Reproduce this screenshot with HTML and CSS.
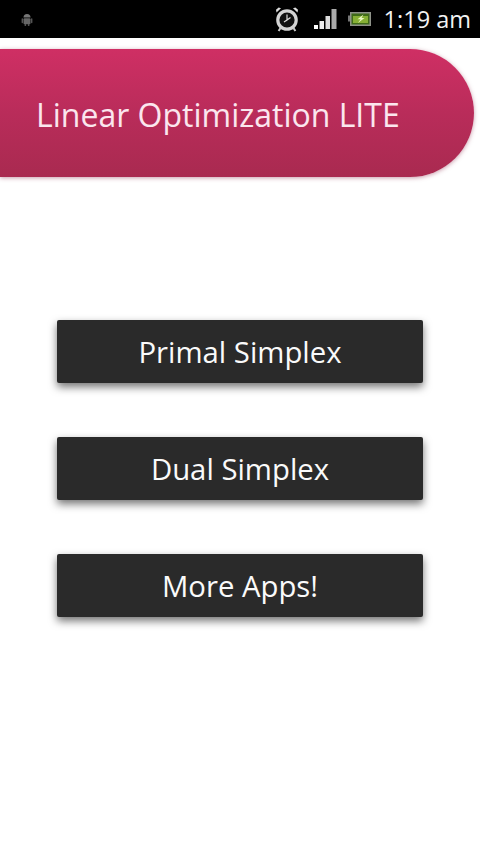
FILE: index.html
```html
<!DOCTYPE html>
<html lang="en">
<head>
<meta charset="utf-8">
<title>Linear Optimization LITE</title>
<link rel="stylesheet" href="styles.css">
</head>
<body>
<div class="status">
  <svg class="ic-android" width="16" height="16" viewBox="0 0 16 16">
    <path d="M4.5 6.5a3.5 3.5 0 0 1 7 0z" fill="#777"/>
    <rect x="4.5" y="7.2" width="7" height="6" rx="1" fill="#666"/>
    <rect x="2.6" y="7.2" width="1.4" height="5" rx=".7" fill="#555"/>
    <rect x="12" y="7.2" width="1.4" height="5" rx=".7" fill="#555"/>
    <rect x="5.6" y="13" width="1.5" height="2" fill="#555"/>
    <rect x="8.9" y="13" width="1.5" height="2" fill="#555"/>
  </svg>
  <div class="status-right">
    <svg class="ic-alarm" width="24" height="26" viewBox="0 0 24 26">
      <circle cx="12" cy="14" r="9.2" fill="#111" stroke="#d4d4d4" stroke-width="3.2"/>
      <path d="M12 8.5V14l3.5-2.5M12 14l-3 2" fill="none" stroke="#ddd" stroke-width="1.2"/>
      <path d="M1.5 6.5 6 2.2 3.6 1.4 1 3.8zM22.5 6.5 18 2.2 20.4 1.4 23 3.8z" fill="#ddd"/>
      <path d="M5.5 22 3.6 25M18.5 22l1.9 3" stroke="#ccc" stroke-width="2"/>
    </svg>
    <svg class="ic-signal" width="24" height="21" viewBox="0 0 24 21">
      <rect x="0" y="16" width="4" height="4" fill="#fff"/>
      <rect x="5.5" y="12" width="4.5" height="8" fill="#eee"/>
      <rect x="11.5" y="7" width="4.5" height="13" fill="#ddd"/>
      <rect x="17.5" y="0" width="5" height="20" fill="#aaa"/>
    </svg>
    <svg class="ic-battery" width="24" height="16" viewBox="0 0 24 16">
      <rect x="0" y="4.5" width="2" height="6" fill="#777"/>
      <rect x="2" y="1" width="21" height="14" fill="#8f938a"/>
      <rect x="3.5" y="2.5" width="18" height="11" fill="#3f6a18"/>
      <rect x="5" y="5" width="15" height="7" fill="#86b034"/>
      <path d="M15.5 3.5 9.5 8.3h3l-2.5 3.7 6.5-5h-3z" fill="#e8f5c0"/>
    </svg>
    <span class="clock">1:19 am</span>
  </div>
</div>
<main class="page">
  <header class="banner"><h1 class="title">Linear Optimization LITE</h1></header>
  <nav class="menu">
    <a class="btn">Primal Simplex</a>
    <a class="btn">Dual Simplex</a>
    <a class="btn">More Apps!</a>
  </nav>
</main>
</body>
</html>
```
FILE: styles.css
```css
html, body { margin: 0; padding: 0; }
body {
  width: 480px;
  height: 854px;
  overflow: hidden;
  background: #fff;
  font-family: "Open Sans", Roboto, "Liberation Sans", sans-serif;
}
.status {
  height: 38px;
  background: #000;
  display: flex;
  align-items: center;
  justify-content: space-between;
  padding: 0 9px 0 19px;
  box-sizing: border-box;
}
.status-right { display: flex; align-items: center; }
.ic-alarm { margin-right: 15px; }
.ic-signal { margin-right: 10px; }
.ic-battery { margin-right: 12px; }
.clock {
  color: #f2f2f2;
  font-size: 23.5px;
  line-height: 38px;
}
.page { display: flex; flex-direction: column; }
.banner {
  margin-top: 11px;
  width: 474px;
  height: 128px;
  box-sizing: border-box;
  display: flex;
  align-items: center;
  padding: 2px 0 0 36px;
  border-radius: 0 64px 64px 0;
  background: linear-gradient(#cf2f64 0%, #b92c5a 50%, #a92a50 100%);
  box-shadow: 0 1px 4px rgba(150, 60, 90, .5);
}
.title {
  margin: 0;
  color: #fbe6ee;
  font-size: 32px;
  font-weight: 400;
  white-space: nowrap;
}
.menu {
  margin-top: 143px;
  display: flex;
  flex-direction: column;
  gap: 54px;
  padding: 0 57px;
}
.btn {
  height: 63px;
  display: flex;
  align-items: center;
  justify-content: center;
  background: #2a2a2a;
  color: #fafafa;
  font-size: 29.3px;
  border-radius: 2px;
  box-shadow: 0 4px 9px rgba(0, 0, 0, .55);
}
```
